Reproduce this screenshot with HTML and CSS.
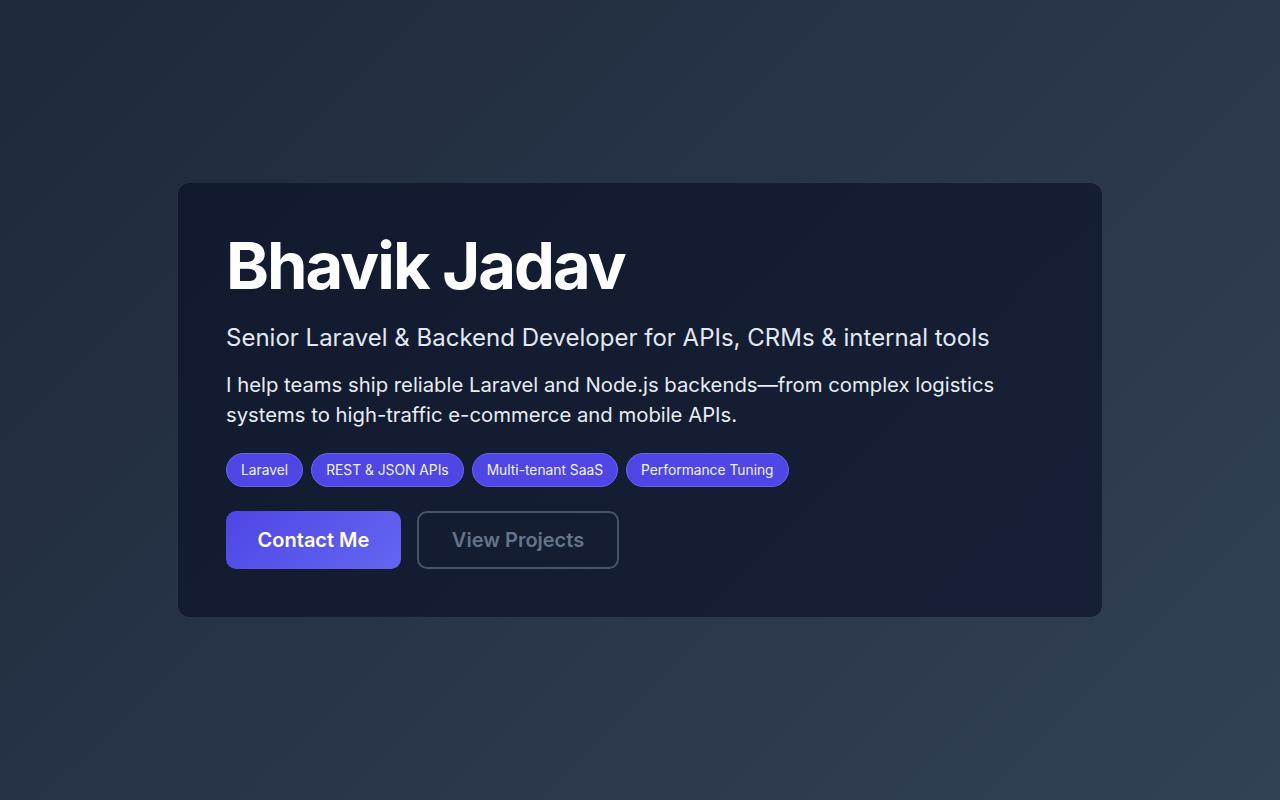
FILE: index.html
```html
<!DOCTYPE html>
<html lang="en">
<head>
<meta charset="utf-8">
<title>Bhavik Jadav</title>
<link rel="stylesheet" href="styles.css">
</head>
<body>
<main class="page">
  <section class="card">
    <h1 class="name">Bhavik Jadav</h1>
    <p class="role">Senior Laravel &amp; Backend Developer for APIs, CRMs &amp; internal tools</p>
    <p class="intro">I help teams ship reliable Laravel and Node.js backends—from complex logistics systems to high-traffic e-commerce and mobile APIs.</p>
    <ul class="tags">
      <li class="tag">Laravel</li>
      <li class="tag">REST &amp; JSON APIs</li>
      <li class="tag">Multi-tenant SaaS</li>
      <li class="tag">Performance Tuning</li>
    </ul>
    <div class="actions">
      <a class="btn btn-primary" href="#contact">Contact Me</a>
      <a class="btn btn-outline" href="#projects">View Projects</a>
    </div>
  </section>
</main>
</body>
</html>
```
FILE: styles.css
```css
* { box-sizing: border-box; }
html, body { margin: 0; padding: 0; }
body {
  font-family: Inter, "Noto Sans", sans-serif;
  background: linear-gradient(135deg, #1e293b 0%, #334155 100%);
  min-height: 100vh;
  color: #f1f5f9;
}
.page {
  min-height: 800px;
  display: flex;
  align-items: center;
  justify-content: center;
}
.card {
  width: 924px;
  background: linear-gradient(135deg, #111a2e 0%, #161f35 100%);
  border-radius: 12px;
  padding: 48px;
}
.name {
  margin: 0;
  font-size: 65px;
  line-height: 70px;
  font-weight: 700;
  letter-spacing: -0.03em;
  color: #ffffff;
}
.role {
  margin: 20px 0 0;
  font-size: 24px;
  line-height: 1.4;
  color: #e2e8f0;
}
.intro {
  margin: 15px 0 0;
  font-size: 20.3px;
  line-height: 30px;
  color: #e8edf3;
}
.tags {
  list-style: none;
  margin: 23px 0 0;
  padding: 0;
  display: flex;
  flex-wrap: wrap;
  gap: 8px;
}
.tag {
  height: 34px;
  display: flex;
  align-items: center;
  padding: 0 14px;
  border-radius: 999px;
  background: #4f46e5;
  border: 1px solid #6366f1;
  font-size: 13.8px;
  color: #eef2ff;
}
.actions {
  margin-top: 24px;
  display: flex;
  gap: 16px;
}
.btn {
  height: 58px;
  display: inline-flex;
  align-items: center;
  justify-content: center;
  border-radius: 10px;
  font-size: 20px;
  font-weight: 600;
  text-decoration: none;
}
.btn-primary {
  width: 175px;
  background: linear-gradient(135deg, #4f46e5 0%, #6366f1 100%);
  color: #ffffff;
}
.btn-outline {
  width: 202px;
  border: 2px solid #475569;
  color: #64748b;
}
```
